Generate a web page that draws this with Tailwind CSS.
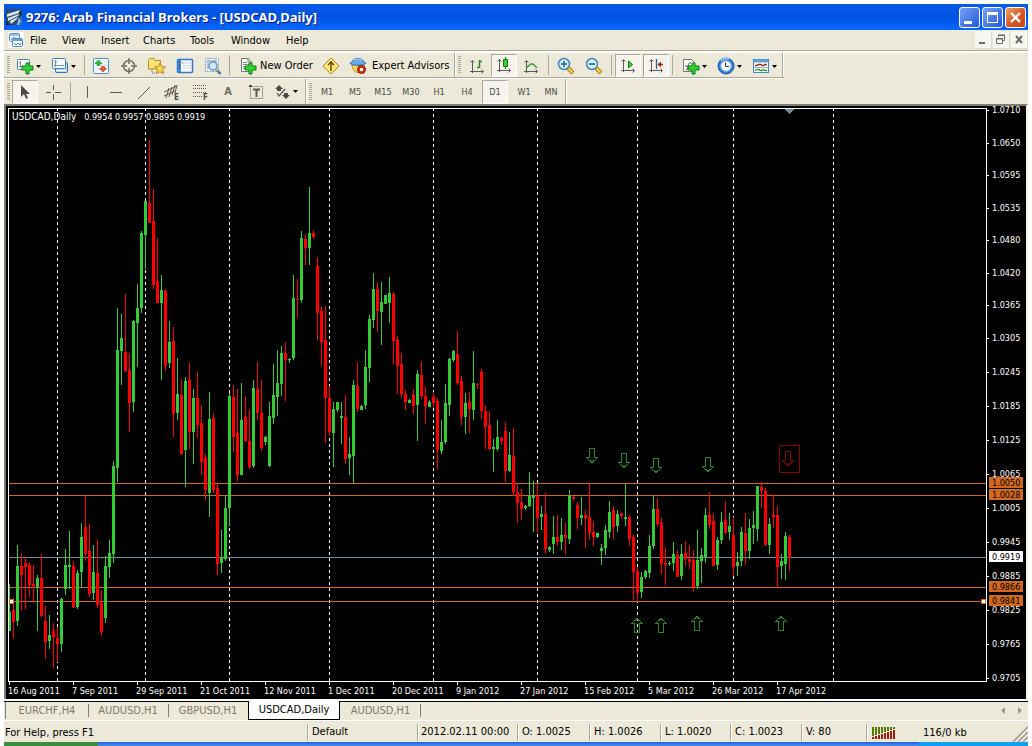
<!DOCTYPE html>
<html lang="en">
<head>
<meta charset="utf-8">
<title>9276: Arab Financial Brokers - [USDCAD,Daily]</title>
<script src="https://cdn.jsdelivr.net/npm/@tailwindcss/browser@4"></script>
</head>
<body class="bg-white">
<div class="flex min-h-screen flex-col overflow-hidden px-1 pt-1 font-['DejaVu_Sans_Condensed','DejaVu_Sans',sans-serif] text-[11px] leading-4 text-black">

  <!-- Title bar -->
  <header class="flex h-[26px] shrink-0 items-center bg-linear-to-b from-[#0a5be8] via-[#0054e3] to-[#0a66ff] pr-[2px] pl-[2px]">
    <svg class="mr-1 shrink-0" width="16" height="16" viewBox="0 0 16 16" aria-hidden="true">
      <rect width="16" height="16" fill="#3a6ea5"/><path d="M0 0h16v6L10 16H0z" fill="#2b4a6c"/>
      <path d="M1 5l13-4-1 3-12 4zM2 9l11-4-1 2-10 5zM4 12l8-4-1 2-6 5z" fill="#d5e6f2"/><path d="M13 8l1 3 1 1-2 4h-2l1-5z" fill="#7fb8e8"/><path d="M0 12l4 4H0zM13 2l3 2v3l-3-3z" fill="#16243c"/>
    </svg>
    <h1 class="min-w-0 flex-1 truncate font-['Noto_Sans',sans-serif] text-[13px] leading-5 font-bold text-white [text-shadow:1px_1px_#0a1883]">9276: Arab Financial Brokers - [USDCAD,Daily]</h1>
    <div class="flex gap-[2px]">
      <button aria-label="Minimize" class="flex size-[21px] items-center justify-center rounded-[3px] border border-white bg-linear-to-br from-[#7ba2f5] to-[#2155dc]"><svg width="19" height="19"><path d="M4 13h8v3H4z" fill="#fff"/></svg></button>
      <button aria-label="Maximize" class="flex size-[21px] items-center justify-center rounded-[3px] border border-white bg-linear-to-br from-[#7ba2f5] to-[#2155dc]"><svg width="19" height="19"><path d="M4 4h11v11H4zM5 7v7h9V7z" fill="#fff" fill-rule="evenodd"/></svg></button>
      <button aria-label="Close" class="flex size-[21px] items-center justify-center rounded-[3px] border border-white bg-linear-to-br from-[#e9a26b] via-[#df5a22] to-[#c8430e]"><svg width="19" height="19"><path d="M5 5l9 9M14 5l-9 9" stroke="#fff" stroke-width="2.4"/></svg></button>
    </div>
  </header>

  <!-- Menu bar -->
  <nav class="flex h-5 shrink-0 items-center bg-[#ece9d8] pl-1">
    <svg class="mr-[5px] shrink-0" width="16" height="16" viewBox="0 0 16 16" aria-hidden="true"><rect width="16" height="16" fill="#fff"/><rect x="1.500" y="1.500" width="10" height="8" rx="1" fill="#e8f1fb" stroke="#5c92cf"/><path d="M2 3h9" stroke="#5c92cf"/><path d="M3 6l1 2 2-3 2 3" fill="none" stroke="#7ba3d0"/><rect x="4.500" y="6.500" width="10" height="8" rx="1" fill="#fff" stroke="#4a86cc"/><path d="M5 8h9" stroke="#6fa1dc" stroke-width="2"/><path d="M6 11l2 2 2-2 2 2 1-2" fill="none" stroke="#4a7fc0"/></svg>
    <div class="flex flex-1 pt-[2px]">
      <button class="w-[33px] text-left pl-[1px]">File</button>
      <button class="w-[39px] text-left">View</button>
      <button class="w-[42px] text-left">Insert</button>
      <button class="w-[47px] text-left">Charts</button>
      <button class="w-[41px] text-left">Tools</button>
      <button class="w-[55px] text-left">Window</button>
      <button class="text-left">Help</button>
    </div>
    <div class="flex gap-[1px]">
      <button aria-label="Minimize chart" class="h-[18px] w-[17px] border-r border-b border-[#dedbcb] bg-[#f7f6f0]"><svg width="16" height="17"><path d="M4 11h6v2H4z" fill="#6b6b66"/></svg></button>
      <button aria-label="Restore chart" class="h-[18px] w-[17px] border-r border-b border-[#dedbcb] bg-[#f7f6f0]"><svg width="16" height="17"><path d="M5.500 6V4.500h6v5H10M5 4h7M3.500 7.500h6v5h-6zM3 8h7" fill="none" stroke="#6b6b66"/></svg></button>
      <button aria-label="Close chart" class="h-[18px] w-[17px] border-r border-b border-[#dedbcb] bg-[#f7f6f0]"><svg width="16" height="17"><path d="M5 5l6 7M11 5l-6 7" stroke="#6b6b66" stroke-width="2"/></svg></button>
    </div>
  </nav>
  <div class="h-[3px] shrink-0 border-t border-b border-t-[#aca899] border-b-[#fff] bg-[#fff]"></div>

  <!-- Standard toolbar -->
  <div class="flex h-[26px] shrink-0 bg-[#ece9d8]">
    <div role="toolbar" aria-label="Standard" class="flex h-[25px] items-center border-b border-[#aca899] shadow-[0_1px_#fff]">
      <span class="ml-[3px] h-[18px] w-[3px] bg-[repeating-linear-gradient(#aca899_0_1px,transparent_1px_2px)]"></span>
      <button aria-label="New chart" class="ml-[3px] flex h-6 w-[35px] items-center gap-[2px] pt-[2px] pl-[3px]">
        <svg width="18" height="18"><rect x="1.500" y="2.500" width="12" height="10" rx="1" fill="#fff" stroke="#3f7fb5"/><path d="M4.500 4v7M3 9.500h5M3 6h2" stroke="#7b8fa0"/><path d="M10 7h3v3h4v4h-4v4h-3v-4H6v-4h4z" fill="#31d431" stroke="#0b7d12" transform="translate(0 -1)"/></svg>
        <svg width="5" height="3"><path d="M0 0h5L2.500 3z"/></svg>
      </button>
      <button aria-label="Profiles" class="flex h-6 w-[35px] items-center gap-[2px] pt-[2px] pl-[3px]">
        <svg width="18" height="18"><rect x="4.500" y="5.500" width="12" height="10" rx="1" fill="#bcd8f0" stroke="#2f6fb5"/><rect x="1.500" y="1.500" width="13" height="10" rx="1" fill="#f6fafd" stroke="#3f7fc0"/><path d="M4.500 3v7M3 8.500h10M3 5h3" stroke="#7b8fa0"/><path d="M6 13.500h9" stroke="#fff"/></svg>
        <svg width="5" height="3"><path d="M0 0h5L2.500 3z"/></svg>
      </button>
      <span class="mx-[1px] h-5 w-[2px] border-l border-[#aca899]"></span>
      <button aria-label="Market Watch" class="flex h-6 w-7 items-center justify-center pt-[2px]"><svg width="18" height="18"><rect x="1.500" y="1.500" width="15" height="15" rx="1" fill="#f4f9fd" stroke="#4a90d0"/><path d="M10 5h5M10 8h5M3 12h5" stroke="#b5cde2" stroke-dasharray="1 1"/><path d="M6.500 3l3.500 3.500H8v2H5v-2H3z" fill="#2fc42f" stroke="#0f7d1a" stroke-width=".6"/><path d="M11 15l-3.500-3.500h2v-2h3v2h2z" fill="#f05a30" stroke="#b3240c" stroke-width=".6"/></svg></button>
      <button aria-label="Data Window" class="flex h-6 w-7 items-center justify-center pt-[2px]"><svg width="18" height="18"><circle cx="9" cy="9" r="5.500" fill="none" stroke="#70706a" stroke-width="1.500"/><path d="M9 1v6M9 11v6M1 9h6M11 9h6" stroke="#70706a" stroke-width="1.500"/></svg></button>
      <button aria-label="Navigator" class="flex h-6 w-7 items-center justify-center pt-[2px]"><svg width="20" height="18"><path d="M1.500 12V3.500L3 1.500h4l1 2h5.500V12z" fill="#fbe27a" stroke="#b98a1e"/><path d="M5 12v4h4" fill="none" stroke="#555" stroke-dasharray="1 1"/><path d="M13 6l1.600 3.600 3.900.4-2.900 2.700.8 3.900-3.400-2-3.400 2 .8-3.900L7.500 10l3.900-.4z" fill="#ffd94a" stroke="#b98018"/></svg></button>
      <button aria-label="Terminal" class="flex h-6 w-7 items-center justify-center pt-[2px]"><svg width="18" height="18"><rect x="1.500" y="2.500" width="15" height="13" rx="1" fill="#f8fbff" stroke="#2f78c8" stroke-width="1.500"/><path d="M2 3h3v12H2z" fill="#3f8ae0"/><path d="M7 6h8M7 8.500h8M7 11h8" stroke="#c6d6ea"/><path d="M3 5h1M3 8h1M3 11h1" stroke="#123"/><path d="M6 6h1" stroke="#d22"/></svg></button>
      <button aria-label="Strategy Tester" class="flex h-6 w-7 items-center justify-center pt-[2px]"><svg width="18" height="18"><path d="M1.500 1.500h13v13h-13z" fill="#e9f1f8" stroke="#8aa7c0" stroke-dasharray="2 1"/><path d="M4 4v8M12 3v5M3 4h9" stroke="#7f95a8"/><circle cx="9" cy="9" r="4" fill="#cfe6f7" stroke="#6b9cc6" stroke-width="1.500"/><path d="M12 12l4.500 5" stroke="#2f6fb5" stroke-width="2.500"/><path d="M12 12l2 2" stroke="#e0b040" stroke-width="2"/></svg></button>
      <span class="mx-[2px] h-5 w-[2px] border-l border-[#aca899]"></span>
      <button class="flex h-6 w-[84px] items-center gap-[3px] pt-[2px] pl-[6px] whitespace-nowrap">
        <svg class="shrink-0" width="18" height="18"><path d="M2.500 1.500h7l3 3v10h-10z" fill="#fff" stroke="#777"/><path d="M9 1v4h4" fill="#ddd" stroke="#777"/><path d="M4 5.500h4M4 7.500h6M4 9.500h4M4 11.500h3" stroke="#888"/><path d="M10 7h3v3h4v4h-4v4h-3v-4H6v-4h4z" fill="#31d431" stroke="#0b7d12" transform="translate(0 -1)"/></svg>
        New Order
      </button>
      <button aria-label="MetaEditor" class="flex h-6 w-7 items-center justify-center pt-[2px]"><svg width="18" height="18"><path d="M9 1l8 8-8 8-8-8z" fill="#ffe56b" stroke="#b08318"/><path d="M9 3l6 6-6 6-6-6z" fill="none" stroke="#f7f0b0"/><path d="M9 4v10M6 8l3-3 3 3" fill="none" stroke="#6a470a" stroke-width="1.500"/></svg></button>
      <button class="flex h-6 w-[109px] items-center gap-[5px] pt-[2px] pl-[4px] whitespace-nowrap">
        <svg class="shrink-0" width="18" height="18"><path d="M3 8a6 7.500 0 0 0 12 0z" fill="#fbdc63" stroke="#b8902a"/><path d="M1 6c1-1 3-1 3-2.500C4 1 14 1 14 3.500 14 5 16 5 17 6c0 3-16 3-16 0z" fill="#6aa9e6" stroke="#2b6cb0"/><path d="M5 3c2-1 5-1 8 0" stroke="#b9dbf8" fill="none"/><circle cx="12.500" cy="12.500" r="4" fill="#e03010" stroke="#8f1505"/><path d="M11 11h3v3h-3z" fill="#fff"/></svg>
        Expert Advisors
      </button>
      <span class="h-full w-[2px] border-l border-[#aca899] bg-white"></span>
    </div>
    <div role="toolbar" aria-label="Charts" class="flex h-[25px] items-center border-b border-[#aca899] shadow-[0_1px_#fff]">
      <span class="ml-[2px] h-[18px] w-[3px] bg-[repeating-linear-gradient(#aca899_0_1px,transparent_1px_2px)]"></span>
      <button aria-label="Bar chart" class="ml-[2px] flex h-6 w-7 items-center justify-center pt-[2px]"><svg width="18" height="18" fill="none" stroke="#5a5a56"><path d="M4.500 16V4M2.500 5.500l2-2 2 2M2 14.500h13M13.500 12.500l2 2-2 2"/><path d="M11.500 3v8M9 10.500h2M12 4.500h2" stroke="#1c8c24" stroke-width="1.500"/></svg></button>
      <button aria-label="Candlesticks" aria-pressed="true" class="flex h-[23px] w-[26px] items-center justify-center border border-[#aca899] border-r-white border-b-white bg-[#f6f4ec]"><svg width="18" height="18" fill="none" stroke="#5a5a56"><path d="M4.500 16V3M2.500 5.500l2-2 2 2M2 14.500h13M13.500 12.500l2 2-2 2"/><path d="M10.500 1v12" stroke="#0b7d12"/><path d="M8.500 3.500h4v7h-4z" fill="#2fd42f" stroke="#0b7d12"/></svg></button>
      <button aria-label="Line chart" class="flex h-6 w-7 items-center justify-center pt-[2px]"><svg width="18" height="18" fill="none" stroke="#5a5a56"><path d="M4.500 16V4M2.500 5.500l2-2 2 2M2 14.500h13M13.500 12.500l2 2-2 2"/><path d="M4 11l5-4h2l4 4" stroke="#2c9a34" stroke-width="1.300"/></svg></button>
      <span class="mr-[2px] ml-[3px] h-5 w-[2px] border-l border-[#aca899]"></span>
      <button aria-label="Zoom in" class="flex h-6 w-7 items-center justify-center pt-[2px]"><svg width="18" height="18"><circle cx="7" cy="7" r="5.500" fill="#d9effa" stroke="#3d86c6" stroke-width="1.500"/><path d="M4 7h6M7 4v6" stroke="#3d7fa8" stroke-width="2"/><path d="M11 11l5 5" stroke="#a87812" stroke-width="4"/><path d="M11.500 11.500l4 4" stroke="#ffe04a" stroke-width="2"/></svg></button>
      <button aria-label="Zoom out" class="flex h-6 w-7 items-center justify-center pt-[2px]"><svg width="18" height="18"><circle cx="7" cy="7" r="5.500" fill="#d9effa" stroke="#3d86c6" stroke-width="1.500"/><path d="M4 7h6" stroke="#3d7fa8" stroke-width="2"/><path d="M11 11l5 5" stroke="#a87812" stroke-width="4"/><path d="M11.500 11.500l4 4" stroke="#ffe04a" stroke-width="2"/></svg></button>
      <span class="mr-[2px] ml-[3px] h-5 w-[2px] border-l border-[#aca899]"></span>
      <button aria-label="Auto scroll" aria-pressed="true" class="mr-[2px] flex h-[23px] w-[26px] items-center justify-center border border-[#aca899] border-r-white border-b-white bg-[#f6f4ec]"><svg width="18" height="18" fill="none" stroke="#5a5a56"><path d="M4.500 16V4M2.500 5.500l2-2 2 2M2 14.500h13M13.500 12.500l2 2-2 2"/><path d="M9.500 5v7l4-3.500z" fill="#2fd42f" stroke="#0b7d12"/></svg></button>
      <button aria-label="Chart shift" aria-pressed="true" class="flex h-[23px] w-[26px] items-center justify-center border border-[#aca899] border-r-white border-b-white bg-[#f6f4ec]"><svg width="18" height="18" fill="none" stroke="#5a5a56"><path d="M4.500 16V4M2.500 5.500l2-2 2 2M2 14.500h13M13.500 12.500l2 2-2 2"/><path d="M9.500 3v10" stroke="#1f5f9c" stroke-width="1.300"/><path d="M11 8.500h5" stroke="#a02808" stroke-width="1.500"/><path d="M10.500 8.500l3.500-3v6z" fill="#a02808" stroke="none"/></svg></button>
      <span class="mr-1 ml-[3px] h-5 w-[2px] border-l border-[#aca899]"></span>
      <button aria-label="Indicators" class="flex h-6 w-[35px] items-center gap-[2px] pt-[2px] pl-[4px]">
        <svg width="18" height="18"><path d="M1.500 2.500h8l3 3v9h-11z" fill="#fff" stroke="#777"/><path d="M4 13c3 1 1-9 5-7M3 9h5" stroke="#555" fill="none"/><path d="M10 7h3v3h4v4h-4v4h-3v-4H6v-4h4z" fill="#31d431" stroke="#0b7d12" transform="translate(0 -1)"/></svg>
        <svg width="5" height="3"><path d="M0 0h5L2.500 3z"/></svg>
      </button>
      <button aria-label="Periods" class="flex h-6 w-[35px] items-center gap-[2px] pt-[2px] pl-[4px]">
        <svg width="18" height="18"><circle cx="9" cy="9" r="8" fill="#2f7fdc" stroke="#1b56a5"/><path d="M4 4a7 7 0 0 1 8-2" stroke="#9cc8f5" fill="none" stroke-width="1.500"/><circle cx="9" cy="9" r="5.200" fill="#eef4fa" stroke="#9fb8d0"/><path d="M8.500 5.500V9.500H12" stroke="#333" fill="none"/></svg>
        <svg width="5" height="3"><path d="M0 0h5L2.500 3z"/></svg>
      </button>
      <button aria-label="Templates" class="flex h-6 w-[34px] items-center gap-[2px] pt-[2px] pl-[4px]">
        <svg width="18" height="18"><rect x="1.500" y="2.500" width="15" height="13" fill="#fff" stroke="#3f86c6"/><path d="M2 4h14" stroke="#5fa0dc" stroke-width="3"/><path d="M3 8.500h2l1-1h3l1 1h2l1-1h2" stroke="#a02818" fill="none" stroke-width="1.300"/><path d="M2 10.500h14" stroke="#9ab8d4"/><path d="M3 13.500l2-1h2l1 1h2l1-1 2 1h2" stroke="#249a34" fill="none" stroke-width="1.300"/></svg>
        <svg width="5" height="3"><path d="M0 0h5L2.500 3z"/></svg>
      </button>
      <span class="h-full w-[2px] border-l border-[#aca899] bg-white"></span>
    </div>
  </div>

  <!-- Line studies and timeframes -->
  <div class="flex h-[25px] shrink-0 bg-[#ece9d8] text-[9px] text-[#4a4a46]">
    <div role="toolbar" aria-label="Line Studies" class="flex items-center">
      <span class="ml-[3px] h-[18px] w-[3px] bg-[repeating-linear-gradient(#aca899_0_1px,transparent_1px_2px)]"></span>
      <button aria-label="Cursor" aria-pressed="true" class="ml-[2px] flex h-[24px] w-[26px] items-center justify-center border border-[#aca899] border-r-white border-b-white bg-[#f6f4ec]"><svg width="16" height="16"><path d="M4 1v12l3-3 2 5 2-1-2-4h4z" fill="#4a4a46"/></svg></button>
      <button aria-label="Crosshair" class="flex h-6 w-[30px] items-center justify-center"><svg width="16" height="16"><path d="M8.500 1v5M8.500 10v6M1 8.500h5M10 8.500h6" stroke="#5a5a56"/></svg></button>
      <span class="mr-[2px] ml-[2px] h-5 w-[2px] border-l border-[#aca899]"></span>
      <button aria-label="Vertical line" class="flex h-6 w-7 items-center justify-center"><svg width="16" height="16"><path d="M7.500 2v12" stroke="#5a5a56"/></svg></button>
      <button aria-label="Horizontal line" class="flex h-6 w-7 items-center justify-center"><svg width="16" height="16"><path d="M2 8.500h12" stroke="#5a5a56"/></svg></button>
      <button aria-label="Trendline" class="flex h-6 w-7 items-center justify-center"><svg width="16" height="16"><path d="M2 15L14 3" stroke="#5a5a56"/></svg></button>
      <button aria-label="Equidistant channel" class="flex h-6 w-7 items-center justify-center"><svg width="20" height="20" fill="none" stroke="#5a5a56"><path d="M2 10l13-6M2 14l11-5M4 16L7 6M7 15l3-10M10 13l3-10M13 11l2-8"/><text x="12" y="18" font-size="8" font-weight="bold" fill="#4a4a46" stroke="none">E</text></svg></button>
      <button aria-label="Fibonacci" class="flex h-6 w-7 items-center justify-center"><svg width="20" height="20" stroke="#5a5a56"><path d="M3 3.500h13M3 6.500h13M3 10.500h13M3 14.500h9" stroke-dasharray="1 1"/><text x="13" y="18" font-size="8" font-weight="bold" fill="#4a4a46" stroke="none">F</text></svg></button>
      <button aria-label="Text" class="h-6 w-7 text-[11px] font-bold text-[#6a6a64]">A</button>
      <button aria-label="Text label" class="flex h-6 w-7 items-center justify-center"><svg width="16" height="16"><rect x="2.500" y="2.500" width="12" height="12" fill="none" stroke="#5a5a56" stroke-dasharray="1 1"/><path d="M5 5.500h7M8.500 5v8" stroke="#5a5a56" stroke-width="2"/><path d="M1 1h3v2H1z" fill="#4a4a46"/></svg></button>
      <button aria-label="Arrows" class="flex h-6 w-[35px] items-center gap-[2px] pl-[4px]">
        <svg width="17" height="16"><path d="M5 1l4 4H7v2H3V5H1zM12 15l-4-4h2V9h4v2h2z" fill="#4a4a46"/><path d="M3 9l2 3 6-7" stroke="#5a5a56" fill="none" stroke-width="1.300"/></svg>
        <svg width="5" height="3"><path d="M0 0h5L2.500 3z"/></svg>
      </button>
      <span class="h-full w-[2px] border-l border-[#aca899] bg-white"></span>
    </div>
    <div role="toolbar" aria-label="Timeframes" class="flex items-center">
      <span class="mr-[1px] ml-[2px] h-[18px] w-[3px] bg-[repeating-linear-gradient(#aca899_0_1px,transparent_1px_2px)]"></span>
      <button class="h-6 w-7 pt-[1px]">M1</button>
      <button class="h-6 w-7 pt-[1px]">M5</button>
      <button class="h-6 w-7 pt-[1px]">M15</button>
      <button class="h-6 w-7 pt-[1px]">M30</button>
      <button class="h-6 w-7 pt-[1px]">H1</button>
      <button class="h-6 w-7 pt-[1px]">H4</button>
      <button aria-pressed="true" class="mx-[1px] h-[24px] w-[26px] border border-[#aca899] border-r-white border-b-white bg-[#f6f4ec] pt-[1px]">D1</button>
      <button class="h-6 w-7 pt-[1px] pl-[2px]">W1</button>
      <button class="h-6 w-7 pt-[1px]">MN</button>
      <span class="h-full w-[2px] border-l border-[#aca899] bg-white"></span>
    </div>
  </div>

  <!-- Chart window -->
  <main class="flex grow flex-col border-t-2 border-l-2 border-[#807d72] border-r-2 border-r-[#f4f2e8] bg-black pt-[2px] pl-[2px] text-[9px]">
    <div class="flex">
      <div class="relative h-[574px] min-w-0 flex-1 overflow-hidden border border-white">
        <svg class="block w-full" height="572" shape-rendering="crispEdges" role="img" aria-label="USDCAD daily candlestick chart">
          <g transform="translate(-9 -109)">
            <g id="separators" stroke="#fff" stroke-dasharray="3 3"></g>
            <g id="levels"></g>
            <g id="candles"></g>
            <g id="arrows" fill="none" stroke="#228b22"></g>
            <path d="M785 109h9l-4.500 5z" fill="#778899"/>
          </g>
        </svg>
        <p class="absolute top-0 left-[3px] flex items-baseline gap-2 leading-4 whitespace-nowrap text-white"><span class="text-[10px]">USDCAD,Daily</span><span>0.9954 0.9957 0.9895 0.9919</span></p>
      </div>
      <svg id="prices" class="block w-[39px] shrink-0 overflow-visible" height="574" fill="#fff" shape-rendering="crispEdges"></svg>
    </div>
    <svg id="dates" class="block w-full overflow-visible" height="17" fill="#fff" shape-rendering="crispEdges"></svg>
  </main>
  <div class="h-[3px] shrink-0 border-b border-black bg-white"></div>

  <!-- Chart tabs -->
  <div role="tablist" class="flex h-[18px] shrink-0 items-start bg-[#ece9d8] pl-[1px] text-[#7b796c]">
    <button role="tab" class="h-[17px] w-[83px] border-l border-[#807d72]">EURCHF,H4</button>
    <button role="tab" class="relative h-[17px] w-20 before:absolute before:top-[2px] before:left-0 before:h-[13px] before:w-px before:bg-[#807d72]">AUDUSD,H1</button>
    <button role="tab" class="relative h-[17px] w-20 before:absolute before:top-[2px] before:left-0 before:h-[13px] before:w-px before:bg-[#807d72]">GBPUSD,H1</button>
    <button role="tab" aria-selected="true" class="-mt-px h-[19px] w-[92px] border border-t-0 border-black bg-white text-black">USDCAD,Daily</button>
    <button role="tab" class="relative h-[17px] w-[81px] after:absolute after:top-[2px] after:right-0 after:h-[13px] after:w-px after:bg-[#807d72]">AUDUSD,H1</button>
    <div class="ml-auto flex h-[17px] items-center gap-[13px] pr-[6px]">
      <button aria-label="Scroll tabs left"><svg class="block" width="4" height="7"><path d="M4 0v7L0 3.500z" fill="#9a988c"/></svg></button>
      <button aria-label="Scroll tabs right"><svg class="block" width="4" height="7"><path d="M0 0v7l4-3.500z" fill="#9a988c"/></svg></button>
    </div>
  </div>

  <!-- Status bar -->
  <footer class="flex h-[22px] shrink-0 items-center border-t border-white bg-[#ece9d8] pt-[2px] whitespace-nowrap">
    <span class="min-w-0 flex-1 pl-[1px]">For Help, press F1</span>
    <span class="h-[17px] w-[110px] border-l border-[#aca899] pl-1 shadow-[inset_1px_0_#fff]">Default</span>
    <span class="h-[17px] w-[100px] border-l border-[#aca899] pl-[3px] shadow-[inset_1px_0_#fff]">2012.02.11 00:00</span>
    <span class="h-[17px] w-[72px] border-l border-[#aca899] pl-1 shadow-[inset_1px_0_#fff]">O: 1.0025</span>
    <span class="h-[17px] w-[71px] border-l border-[#aca899] pl-1 shadow-[inset_1px_0_#fff]">H: 1.0026</span>
    <span class="h-[17px] w-[70px] border-l border-[#aca899] pl-1 shadow-[inset_1px_0_#fff]">L: 1.0020</span>
    <span class="h-[17px] w-[71px] border-l border-[#aca899] pl-1 shadow-[inset_1px_0_#fff]">C: 1.0023</span>
    <span class="h-[17px] w-[65px] border-l border-[#aca899] pl-1 shadow-[inset_1px_0_#fff]">V: 80</span>
    <span class="flex h-[17px] w-[57px] items-center border-l border-[#aca899] pl-[5px] shadow-[inset_1px_0_#fff]">
      <svg id="signal" width="23" height="12" shape-rendering="crispEdges" aria-label="Connection"></svg>
    </span>
    <span class="w-[89px]">116/0 kb</span>
    <svg class="self-end" width="16" height="16"><path d="M1 16L16 1M6 16L16 6M11 16l5-5" stroke="#aca899" stroke-width="2"/><path d="M3 16L16 3M8 16l8-8M13 16l3-3" stroke="#fff"/></svg>
  </footer>

  <!-- Top edge of the taskbar -->
  <div class="flex h-1 shrink-0">
    <div class="w-[94px] bg-[#3c8f3c]"></div>
    <div class="flex-1 bg-linear-to-b from-[#245edb] to-[#4a94f0]"></div>
    <div class="w-[109px] bg-[#12a0ee]"></div>
  </div>
</div>

<script>
const NS = 'http://www.w3.org/2000/svg';
function add(parent, tag, attrs, text) {
  const el = document.createElementNS(NS, tag);
  for (const k in attrs) el.setAttribute(k, attrs[k]);
  if (text) el.textContent = text;
  parent.appendChild(el);
  return el;
}
const byId = id => document.getElementById(id);

// Month separators
for (const x of [57,145,229,329,433,537,637,733,833])
  add(byId('separators'), 'path', { d: `M${x}.5 108V681` });

// Horizontal levels
const levels = [[483,'1.0050','#d2691e','#000'],[495,'1.0028','#d2691e','#000'],[557,'0.9919','#fff','#000'],[587,'0.9866','#d2691e','#000'],[601,'0.9841','#d2691e','#000']];
for (const [y,, c] of levels)
  add(byId('levels'), 'rect', { x: 9, y, width: '100%', height: 1, fill: c === '#fff' ? '#778899' : c });

// Candles, 4 px apart: direction, high, body top, body bottom, low
const candles = `g584,612,631,631 r598,610,622,639 g545,566,621,626 r553,566,575,611 r557,563,567,609 r562,565,585,597 r565,584,586,603 g575,578,587,631 r554,578,616,617 r606,621,642,659 g615,635,641,649 r623,631,637,668 r627,638,644,662 g598,599,644,652 g549,565,589,595 g531,565,567,589 r561,566,607,608 g570,573,607,609 g523,537,572,587 r496,527,554,561 r524,551,594,597 g545,572,593,600 r540,573,605,608 r590,603,632,636 g556,566,618,623 g540,553,567,578 g461,466,554,563
g308,350,468,482 g314,338,351,385 r294,352,371,372 r353,370,403,432 g320,321,402,412 g284,308,323,367 g231,233,308,313 g201,201,235,269 r140,203,223,223 r189,221,285,289 r238,281,303,303 g275,290,303,380 r289,291,366,371 g321,342,363,368 r327,341,414,437 g358,394,413,420 r379,395,454,455 g377,381,450,487 r363,380,432,449 g389,398,432,464 r372,398,425,438 r405,423,462,475 r454,458,490,500 g392,419,493,517 r413,418,490,493 r483,488,564,575 g530,558,563,573 g496,508,559,561 g393,396,508,526
r385,397,437,452 r389,433,475,481 g383,420,475,475 r396,417,441,442 r409,441,467,469 g380,388,466,468 r362,389,413,420 r380,413,448,451 g436,437,442,445 g402,416,466,467 g364,395,418,424 g350,383,397,416 g346,353,384,396 r342,353,360,401 g358,359,360,363 g275,298,358,360 r279,299,300,318 g231,238,300,303 r234,239,248,265 g187,233,248,265 r230,233,237,239 r257,266,313,340 r306,311,342,366 r306,340,398,443 r386,398,432,436 g402,409,433,467 g402,402,410,412 g402,416,418,444 r395,417,459,464 g437,454,458,475 g380,385,456,483 r363,386,409,412 g405,406,410,410 g350,367,405,409 g315,319,368,382 g273,289,320,328 r282,289,311,332 g282,302,312,345 g295,295,304,304 g277,293,303,323 r292,294,341,364 r336,340,366,394 r353,364,394,398 r390,394,402,410 g399,400,403,403 r389,395,406,414 g370,374,405,441 r361,375,396,399 r387,396,406,424 g400,402,407,407 r392,397,403,408 r398,401,450,469 g420,442,451,454 g384,403,442,444 g358,359,405,416 g350,351,360,362 r331,354,383,385 r376,381,417,425 g393,403,417,434
r392,402,409,433 g351,383,410,420 r383,384,385,389 r369,372,411,419 r405,411,427,449 r411,425,449,450 g439,447,449,472 g420,437,449,451 r437,438,441,445 r422,431,471,482 g432,455,471,472 r428,456,492,496 r483,492,503,523 r489,502,509,520 g505,506,508,510 g472,496,506,507 g481,496,498,532 r483,496,518,533 g506,514,517,530 r493,514,549,554 g546,547,550,552 g516,537,544,554 r515,537,542,546 g518,535,542,550 r523,535,538,555 g490,496,539,544 r496,497,499,501 r502,505,518,529 g497,515,518,525 r510,515,518,548 r483,517,533,540 r521,532,537,546 g533,533,537,538 g544,548,551,565 g525,530,548,555 g501,512,532,538 r506,510,527,539 g510,514,526,532 r513,513,516,519
g484,517,519,526 r515,517,539,546 r535,537,572,600 r567,571,593,602 g572,577,592,598 g570,571,577,579 g535,546,573,578 g496,509,546,549 r498,509,524,527 r517,523,564,574 r548,563,565,585 g561,563,564,566 g542,554,563,571 r550,555,577,577 g544,554,576,580 r541,553,559,566 r545,559,562,569 r550,560,587,592 g530,560,586,589 g548,555,561,583 g508,515,557,563 r492,515,525,529 r513,521,566,566 g537,540,565,570 g512,522,540,544 r501,520,533,534 g513,526,532,540 r517,535,567,576 g552,562,566,576 g527,532,561,566 r513,533,551,565 g519,528,551,559 g511,525,528,544 g486,486,529,541 r482,487,491,508 r488,491,545,546 g518,524,545,554 r494,515,517,528 r506,515,567,588 g554,561,566,579 g532,536,564,580 r535,537,558,571`.split(/\s+/);
candles.forEach((c, i) => {
  const x = 9 + i * 4, fill = c[0] === 'g' ? '#32cd32' : '#ff0000';
  const [hi, top, bottom, lo] = c.slice(1).split(',').map(Number);
  add(byId('candles'), 'path', { fill, d: `M${x} ${hi}h1V${lo}h-1zM${x - 1} ${top}h3V${bottom}h-3z` });
});

// Signal arrows: centre x, top y
const down = (x, y) => `M${x - 2.5} ${y + .5}h5v9h3l-5.5 5-5.500-5h3z`;
const up = (x, y) => `M${x - 2.5} ${y + 14.5}h5v-9h3l-5.500-5-5.500 5h3z`;
for (const [x, y] of [[592,448],[624,453],[656,458],[708,457]]) add(byId('arrows'), 'path', { d: down(x, y) });
for (const [x, y] of [[637,618],[661,618],[697,616],[781,616]]) add(byId('arrows'), 'path', { d: up(x, y) });
add(byId('arrows'), 'path', { d: down(788, 451) + 'M779.500 445.500h20v27h-20z', stroke: '#8b0000' });

// Handles of the selected level
add(byId('arrows'), 'rect', { x: 9.5, y: 599.5, width: 4, height: 4, fill: '#fff', stroke: '#d2691e' });
add(byId('arrows'), 'rect', { x: 981.5, y: 599.5, width: 4, height: 4, fill: '#fff', stroke: '#d2691e' });

// Price axis
[['1.0710',110],['1.0650',143],['1.0595',175],['1.0535',208],['1.0480',240],['1.0420',273],['1.0365',305],['1.0305',338],['1.0245',372],['1.0185',406],['1.0125',440],['1.0065',474],['1.0005',508],['0.9945',542],['0.9885',576],['0.9825',610],['0.9765',644],['0.9705',678]].forEach(([t, y]) => {
  add(byId('prices'), 'rect', { x: 0, y: y - 108, width: 2, height: 1 });
  add(byId('prices'), 'text', { x: 5, y: y - 105 }, t);
});
for (const [y, t, bg, fg] of levels) {
  add(byId('prices'), 'rect', { x: 2, y: y - 114, width: 34, height: 11, fill: bg });
  add(byId('prices'), 'text', { x: 5, y: y - 105, fill: fg }, t);
}

// Time axis
['16 Aug 2011','7 Sep 2011','29 Sep 2011','21 Oct 2011','12 Nov 2011','1 Dec 2011','20 Dec 2011','9 Jan 2012','27 Jan 2012','15 Feb 2012','5 Mar 2012','26 Mar 2012','17 Apr 2012'].forEach((t, i) => {
  add(byId('dates'), 'rect', { x: 1 + i * 64, y: 0, width: 1, height: 3 });
  add(byId('dates'), 'text', { x: i * 64, y: 12 }, t);
});

// Connection bars
for (let i = 0; i < 8; i++) {
  const h = 2 + i;
  add(byId('signal'), 'rect', { x: i * 3, y: 0, width: 2, height: 11 - h, fill: '#557a0a' });
  add(byId('signal'), 'rect', { x: i * 3, y: 12 - h, width: 2, height: h, fill: '#a01c0c' });
}
</script>
</body>
</html>
